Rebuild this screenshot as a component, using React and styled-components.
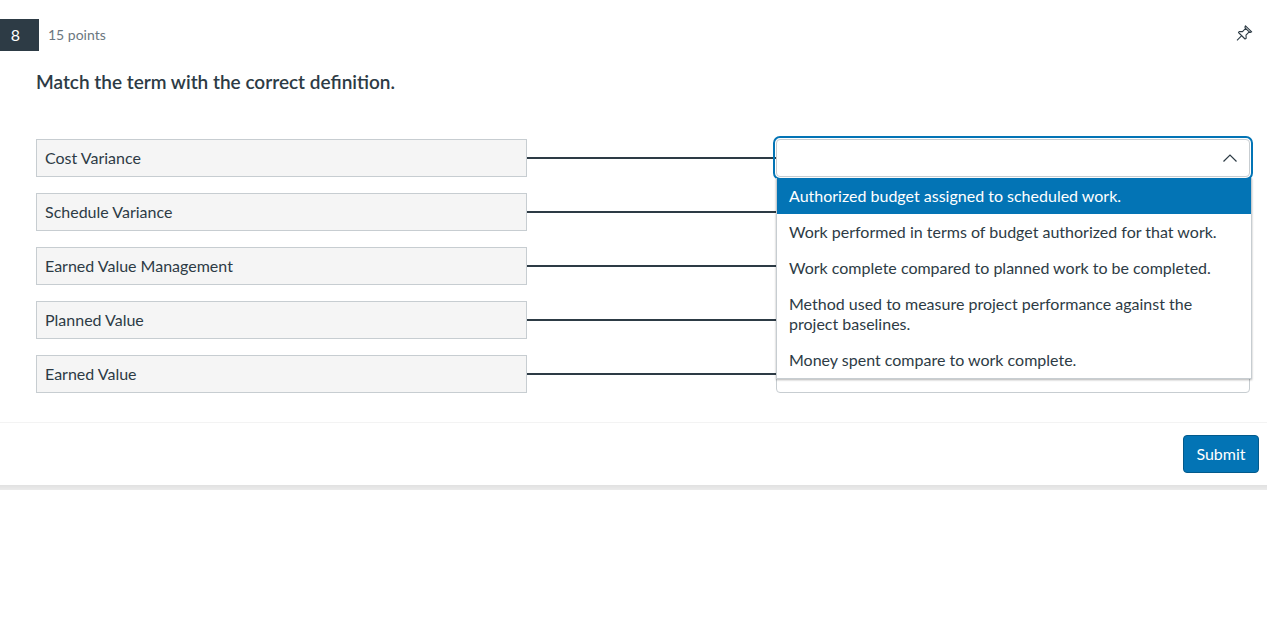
import React, { useState } from "react";
import styled, { createGlobalStyle } from "styled-components";

const GlobalStyle = createGlobalStyle`
  * { box-sizing: border-box; }
  body {
    margin: 0;
    background: #fff;
    color: #2d3b45;
    font: 400 16px/20px Lato, "Liberation Sans", sans-serif;
  }
`;

const Card = styled.main`
  margin: 19px 3px 0 0;
  &::after {
    content: "";
    display: block;
    height: 5px;
    background: linear-gradient(#e1e1e1, #ebebeb);
  }
`;

const Header = styled.header`
  display: flex;
  align-items: center;
  gap: 9px;
  height: 32px;
  padding-right: 14px;
`;

const QuestionNumber = styled.span`
  width: 39px;
  padding: 6px 8px 6px 0;
  background: #2d3b45;
  color: #fff;
  text-align: center;
`;

const Points = styled.span`
  flex: 1;
  color: #6b7780;
  font-size: 14px;
`;

const PinButton = styled.button`
  display: flex;
  padding: 0;
  margin-bottom: 4px;
  border: 0;
  background: none;
  color: #2d3b45;
  cursor: pointer;
`;

const Body = styled.section`
  padding: 19px 17px 29px 36px;
`;

const Prompt = styled.h1`
  margin: 0 0 45px;
  font-size: 19px;
  line-height: 24px;
  font-weight: 600;
`;

const Rows = styled.div`
  display: grid;
  gap: 16px;
`;

const Row = styled.div`
  display: grid;
  grid-template-columns: 491fr 249fr 474fr;
  align-items: center;
`;

const Term = styled.label`
  padding: 8px;
  border: 1px solid #c7cdd1;
  background: #f5f5f5;
`;

const Connector = styled.span`
  height: 2px;
  background: #2d3b45;
`;

const Field = styled.div`
  position: relative;
  display: flex;
`;

const fieldBox = `
  width: 100%;
  height: 38px;
  padding: 0 32px 0 12px;
  border: 1px solid #c7cdd1;
  border-radius: 4px;
  background: #fff;
  color: inherit;
  font: inherit;
`;

const Combo = styled.input`
  ${fieldBox}
  outline: 2px solid #0374b5;
  outline-offset: 1px;
`;

const Choice = styled.select`
  ${fieldBox}
  appearance: none;
`;

const Chevron = styled.svg`
  position: absolute;
  right: 13px;
  top: 12px;
  pointer-events: none;
`;

const Menu = styled.ul`
  position: absolute;
  z-index: 1;
  top: 39px;
  left: 0;
  right: -2px;
  margin: 0;
  padding: 0;
  border: 1px solid #c7cdd1;
  border-top: 0;
  background: #fff;
  box-shadow: 0 1px 2px rgba(0, 0, 0, 0.3);
  list-style: none;
`;

const Option = styled.li`
  padding: 8px 12px;
  background: ${(p) => (p.$active ? "#0374b5" : "#fff")};
  color: ${(p) => (p.$active ? "#fff" : "inherit")};
  cursor: pointer;
`;

const Footer = styled.footer`
  display: flex;
  justify-content: flex-end;
  padding: 12px 8px;
  border-top: 1px solid #f3f3f3;
`;

const SubmitButton = styled.button`
  min-width: 76px;
  padding: 8px 12px;
  border: 1px solid #025a8c;
  border-radius: 4px;
  background: #0374b5;
  color: #fff;
  font: inherit;
  cursor: pointer;
`;

const terms = [
  "Cost Variance",
  "Schedule Variance",
  "Earned Value Management",
  "Planned Value",
  "Earned Value",
];

const definitions = [
  "Authorized budget assigned to scheduled work.",
  "Work performed in terms of budget authorized for that work.",
  "Work complete compared to planned work to be completed.",
  "Method used to measure project performance against the project baselines.",
  "Money spent compare to work complete.",
];

function DefinitionCombo({ id }) {
  const [open, setOpen] = useState(true);
  const [active, setActive] = useState(0);
  const [value, setValue] = useState("");
  return (
    <Field>
      <Combo
        id={id}
        role="combobox"
        aria-expanded={open}
        aria-controls={`${id}-menu`}
        readOnly
        value={value}
        onClick={() => setOpen(!open)}
      />
      <Chevron width="14" height="14" viewBox="0 0 14 14" fill="none" stroke="#2d3b45" strokeWidth="1.2" aria-hidden="true">
        <path d={open ? "M.5 10.5 7 4l6.5 6.5" : "M.5 4 7 10.5 13.5 4"} />
      </Chevron>
      {open && (
        <Menu id={`${id}-menu`} role="listbox">
          {definitions.map((text, i) => (
            <Option
              key={text}
              role="option"
              aria-selected={i === active}
              $active={i === active}
              onMouseEnter={() => setActive(i)}
              onClick={() => {
                setValue(text);
                setOpen(false);
              }}
            >
              {text}
            </Option>
          ))}
        </Menu>
      )}
    </Field>
  );
}

function DefinitionSelect({ id }) {
  return (
    <Field>
      <Choice id={id} defaultValue="">
        <option value="" />
        {definitions.map((text) => (
          <option key={text}>{text}</option>
        ))}
      </Choice>
    </Field>
  );
}

export default function App() {
  return (
    <>
      <GlobalStyle />
      <Card>
        <Header>
          <QuestionNumber>8</QuestionNumber>
          <Points>15 points</Points>
          <PinButton aria-label="Pin question">
            <svg width="17" height="16" viewBox="0 0 17 16" fill="none" stroke="currentColor" strokeWidth="1.1" strokeLinejoin="round">
              <path d="M9.5.8 15.7 6.8 14.2 7.5 13.2 6.800 10 10.2 10.2 13.2 9 14 2.5 7.5 3.5 6.5 6.5 6.6 9.6 3.3 8.9 2.2ZM9.6 3.3 13.2 6.8M5.7 10.7 1 15.3" />
            </svg>
          </PinButton>
        </Header>
        <Body>
          <Prompt>Match the term with the correct definition.</Prompt>
          <Rows>
            {terms.map((term, i) => (
              <Row key={term}>
                <Term htmlFor={`term-${i}`}>{term}</Term>
                <Connector />
                {i === 0 ? <DefinitionCombo id={`term-${i}`} /> : <DefinitionSelect id={`term-${i}`} />}
              </Row>
            ))}
          </Rows>
        </Body>
        <Footer>
          <SubmitButton type="button">Submit</SubmitButton>
        </Footer>
      </Card>
    </>
  );
}
